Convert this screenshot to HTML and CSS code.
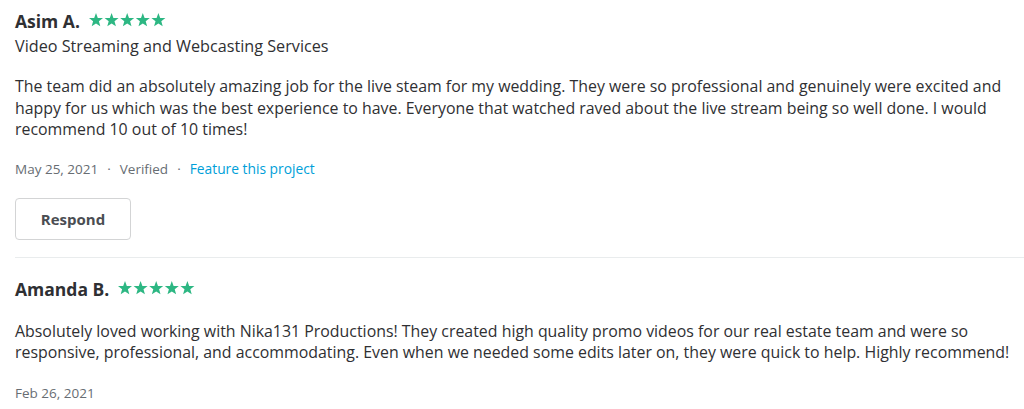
FILE: index.html
```html
<!DOCTYPE html>
<html>
<head>
<meta charset="utf-8">
<link rel="stylesheet" href="styles.css">
</head>
<body>
<div class="list">
  <div class="review">
    <div class="head">
      <span class="name">Asim A.</span>
      <svg class="stars" width="77" height="14" viewBox="0 0 77 14">
        <g fill="#2db783">
          <polygon points="7,0 8.8,4.9 14,5.1 9.9,8.3 11.3,13.3 7,10.4 2.7,13.3 4.1,8.3 0,5.1 5.2,4.9"/>
          <polygon transform="translate(15.6 0)" points="7,0 8.8,4.9 14,5.1 9.9,8.3 11.3,13.3 7,10.4 2.7,13.3 4.1,8.3 0,5.1 5.2,4.9"/>
          <polygon transform="translate(31.2 0)" points="7,0 8.8,4.9 14,5.1 9.9,8.3 11.3,13.3 7,10.4 2.7,13.3 4.1,8.3 0,5.1 5.2,4.9"/>
          <polygon transform="translate(46.8 0)" points="7,0 8.8,4.9 14,5.1 9.9,8.3 11.3,13.3 7,10.4 2.7,13.3 4.1,8.3 0,5.1 5.2,4.9"/>
          <polygon transform="translate(62.4 0)" points="7,0 8.8,4.9 14,5.1 9.9,8.3 11.3,13.3 7,10.4 2.7,13.3 4.1,8.3 0,5.1 5.2,4.9"/>
        </g>
      </svg>
    </div>
    <div class="service">Video Streaming and Webcasting Services</div>
    <p class="text">The team did an absolutely amazing job for the live steam for my wedding. They were so professional and genuinely were excited and happy for us which was the best experience to have. Everyone that watched raved about the live stream being so well done. I would recommend 10 out of 10 times!</p>
    <div class="meta"><span>May 25, 2021</span><span class="dot">·</span><span>Verified</span><span class="dot">·</span><a class="link" href="#">Feature this project</a></div>
    <button class="btn">Respond</button>
  </div>
  <div class="review second">
    <div class="head">
      <span class="name">Amanda B.</span>
      <svg class="stars" width="77" height="14" viewBox="0 0 77 14">
        <g fill="#2db783">
          <polygon points="7,0 8.8,4.9 14,5.1 9.9,8.3 11.3,13.3 7,10.4 2.7,13.3 4.1,8.3 0,5.1 5.2,4.9"/>
          <polygon transform="translate(15.6 0)" points="7,0 8.8,4.9 14,5.1 9.9,8.3 11.3,13.3 7,10.4 2.7,13.3 4.1,8.3 0,5.1 5.2,4.9"/>
          <polygon transform="translate(31.2 0)" points="7,0 8.8,4.9 14,5.1 9.9,8.3 11.3,13.3 7,10.4 2.7,13.3 4.1,8.3 0,5.1 5.2,4.9"/>
          <polygon transform="translate(46.8 0)" points="7,0 8.8,4.9 14,5.1 9.9,8.3 11.3,13.3 7,10.4 2.7,13.3 4.1,8.3 0,5.1 5.2,4.9"/>
          <polygon transform="translate(62.4 0)" points="7,0 8.8,4.9 14,5.1 9.9,8.3 11.3,13.3 7,10.4 2.7,13.3 4.1,8.3 0,5.1 5.2,4.9"/>
        </g>
      </svg>
    </div>
    <p class="text">Absolutely loved working with Nika131 Productions! They created high quality promo videos for our real estate team and were so responsive, professional, and accommodating. Even when we needed some edits later on, they were quick to help. Highly recommend!</p>
    <div class="meta"><span>Feb 26, 2021</span></div>
  </div>
</div>
</body>
</html>
```

FILE: styles.css
```css
html, body {
  margin: 0;
  padding: 0;
  background: #ffffff;
}
body {
  font-family: "Open Sans", "Noto Sans", sans-serif;
  color: #2f3033;
  overflow: hidden;
}
.list {
  padding-left: 15px;
}
.review {
  padding-top: 9px;
  padding-bottom: 17px;
  border-bottom: 1px solid #e9eced;
}
.review.second {
  padding-top: 19px;
  border-bottom: none;
}
.head {
  display: flex;
  align-items: center;
  gap: 9px;
  height: 24px;
}
.name {
  font-size: 17.5px;
  font-weight: 700;
  line-height: 24px;
}
.stars {
  display: block;
  margin-top: -2px;
}
.service {
  margin-top: 1px;
  font-size: 16.2px;
  line-height: 24px;
}
.text {
  margin: 18px 0 0 0;
  font-size: 15.9px;
  line-height: 21.5px;
}
.second .text {
  margin-top: 20px;
}
.meta {
  margin-top: 18px;
  font-size: 13.5px;
  line-height: 20px;
  color: #676d73;
  display: flex;
  align-items: center;
}
.second .meta {
  margin-top: 19px;
}
.dot {
  margin: 0 9px;
}
.link {
  color: #009fd9;
  text-decoration: none;
  font-size: 13.8px;
}
.btn {
  display: block;
  margin-top: 19px;
  width: 116px;
  height: 42px;
  background: #ffffff;
  border: 1px solid #d3d4d5;
  border-radius: 4px;
  font-family: inherit;
  font-size: 15px;
  font-weight: 700;
  color: #4a4d52;
  padding: 0;
}
```
